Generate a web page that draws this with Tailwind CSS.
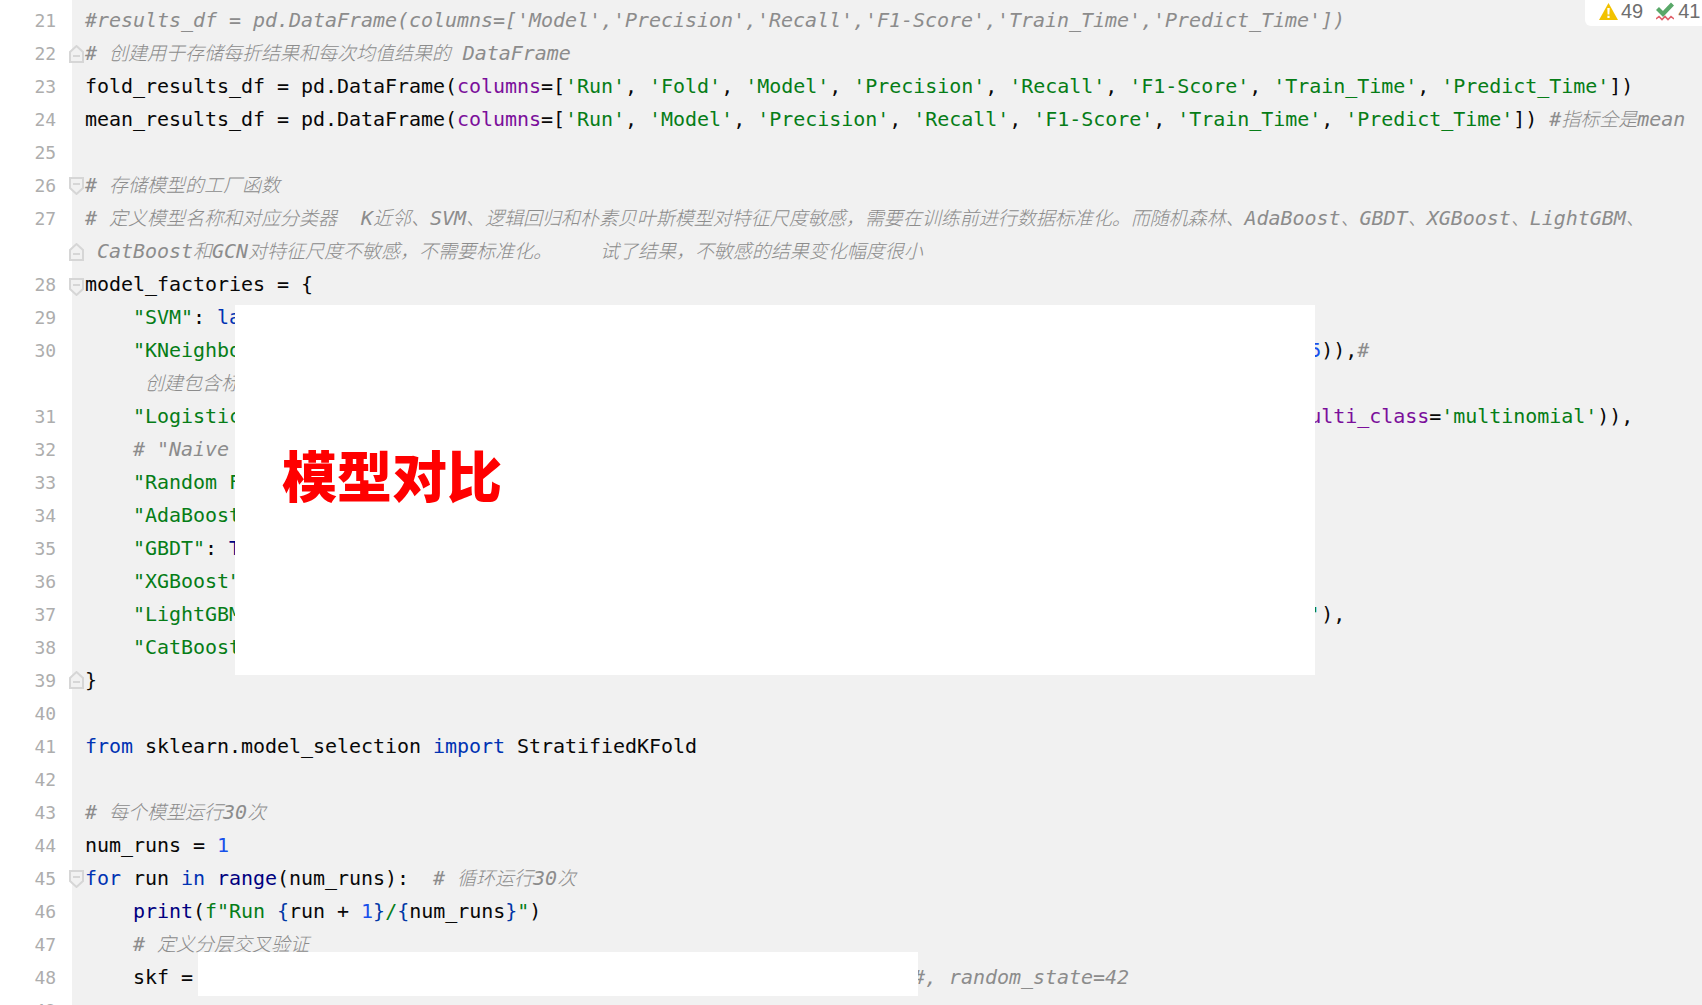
<!DOCTYPE html>
<html lang="zh">
<head>
<meta charset="utf-8">
<script src="https://cdn.jsdelivr.net/npm/@tailwindcss/browser@4"></script>
<title>模型对比</title>
</head>
<body class="bg-white">
<div class="relative w-[1702px] h-[1005px] overflow-hidden bg-white font-['DejaVu_Sans_Mono','Noto_Sans_CJK_SC',monospace]">
  <div class="absolute left-[72px] top-0 bottom-0 right-0 bg-[#f1f1f1]"></div>
  <div class="relative flex flex-col pt-[4px] text-[20px] leading-[33px] tracking-[-0.04px] text-[#080808] whitespace-pre">
    <div class="flex h-[33px] shrink-0"><span class="w-[56px] text-right text-[18px] text-[#adadad]">21</span><span class="pl-[29px] italic text-[#8c8c8c]">#results_df = pd.DataFrame(columns=['Model','Precision','Recall','F1-Score','Train_Time','Predict_Time'])</span></div>
    <div class="flex h-[33px] shrink-0"><span class="w-[56px] text-right text-[18px] text-[#adadad]">22</span><span class="pl-[29px] italic font-light text-[#8c8c8c]"># <span class="text-[19.05px]">创建用于存储每折结果和每次均值结果的</span> DataFrame</span></div>
    <div class="flex h-[33px] shrink-0"><span class="w-[56px] text-right text-[18px] text-[#adadad]">23</span><span class="pl-[29px]">fold_results_df = pd.DataFrame(<span class="text-[#7b0f9b]">columns</span>=[<span class="text-[#067d17]">'Run'</span>, <span class="text-[#067d17]">'Fold'</span>, <span class="text-[#067d17]">'Model'</span>, <span class="text-[#067d17]">'Precision'</span>, <span class="text-[#067d17]">'Recall'</span>, <span class="text-[#067d17]">'F1-Score'</span>, <span class="text-[#067d17]">'Train_Time'</span>, <span class="text-[#067d17]">'Predict_Time'</span>])</span></div>
    <div class="flex h-[33px] shrink-0"><span class="w-[56px] text-right text-[18px] text-[#adadad]">24</span><span class="pl-[29px]">mean_results_df = pd.DataFrame(<span class="text-[#7b0f9b]">columns</span>=[<span class="text-[#067d17]">'Run'</span>, <span class="text-[#067d17]">'Model'</span>, <span class="text-[#067d17]">'Precision'</span>, <span class="text-[#067d17]">'Recall'</span>, <span class="text-[#067d17]">'F1-Score'</span>, <span class="text-[#067d17]">'Train_Time'</span>, <span class="text-[#067d17]">'Predict_Time'</span>]) <span class="italic font-light text-[#8c8c8c]">#<span class="text-[19.05px]">指标全是</span>mean</span></span></div>
    <div class="flex h-[33px] shrink-0"><span class="w-[56px] text-right text-[18px] text-[#adadad]">25</span></div>
    <div class="flex h-[33px] shrink-0"><span class="w-[56px] text-right text-[18px] text-[#adadad]">26</span><span class="pl-[29px] italic font-light text-[#8c8c8c]"># <span class="text-[19.05px]">存储模型的工厂函数</span></span></div>
    <div class="flex h-[33px] shrink-0"><span class="w-[56px] text-right text-[18px] text-[#adadad]">27</span><span class="pl-[29px] italic font-light text-[#8c8c8c]"># <span class="text-[19.05px]">定义模型名称和对应分类器</span>  K<span class="text-[19.05px]">近邻、</span>SVM<span class="text-[19.05px]">、逻辑回归和朴素贝叶斯模型对特征尺度敏感，需要在训练前进行数据标准化。而随机森林、</span>AdaBoost<span class="text-[19.05px]">、</span>GBDT<span class="text-[19.05px]">、</span>XGBoost<span class="text-[19.05px]">、</span>LightGBM<span class="text-[19.05px]">、</span></span></div>
    <div class="flex h-[33px] shrink-0"><span class="w-[56px]"></span><span class="pl-[29px] italic font-light text-[#8c8c8c]"> CatBoost<span class="text-[19.05px]">和</span>GCN<span class="text-[19.05px]">对特征尺度不敏感，不需要标准化。</span>    <span class="text-[19.05px]">试了结果，不敏感的结果变化幅度很小</span></span></div>
    <div class="flex h-[33px] shrink-0"><span class="w-[56px] text-right text-[18px] text-[#adadad]">28</span><span class="pl-[29px]">model_factories = {</span></div>
    <div class="flex h-[33px] shrink-0"><span class="w-[56px] text-right text-[18px] text-[#adadad]">29</span><span class="pl-[29px]">    <span class="text-[#067d17]">"SVM"</span>: <span class="text-[#0033b3]">la</span></span></div>
    <div class="flex h-[33px] shrink-0"><span class="w-[56px] text-right text-[18px] text-[#adadad]">30</span><span class="pl-[29px]">    <span class="text-[#067d17]">"KNeighbo</span>                                                                                         <span class="text-[#1750eb]">5</span>)),<span class="italic font-light text-[#8c8c8c]">#</span></span></div>
    <div class="flex h-[33px] shrink-0"><span class="w-[56px]"></span><span class="pl-[29px] italic font-light text-[#8c8c8c]">     <span class="text-[19.05px]">创建包含标</span></span></div>
    <div class="flex h-[33px] shrink-0"><span class="w-[56px] text-right text-[18px] text-[#adadad]">31</span><span class="pl-[29px]">    <span class="text-[#067d17]">"Logistic</span>                                                                                         <span class="text-[#7b0f9b]">ulti_class</span>=<span class="text-[#067d17]">'multinomial'</span>)),</span></div>
    <div class="flex h-[33px] shrink-0"><span class="w-[56px] text-right text-[18px] text-[#adadad]">32</span><span class="pl-[29px] italic font-light text-[#8c8c8c]">    # "Naive </span></div>
    <div class="flex h-[33px] shrink-0"><span class="w-[56px] text-right text-[18px] text-[#adadad]">33</span><span class="pl-[29px]">    <span class="text-[#067d17]">"Random F</span></span></div>
    <div class="flex h-[33px] shrink-0"><span class="w-[56px] text-right text-[18px] text-[#adadad]">34</span><span class="pl-[29px]">    <span class="text-[#067d17]">"AdaBoost</span></span></div>
    <div class="flex h-[33px] shrink-0"><span class="w-[56px] text-right text-[18px] text-[#adadad]">35</span><span class="pl-[29px]">    <span class="text-[#067d17]">"GBDT"</span>: <span class="text-[#000080]">T</span></span></div>
    <div class="flex h-[33px] shrink-0"><span class="w-[56px] text-right text-[18px] text-[#adadad]">36</span><span class="pl-[29px]">    <span class="text-[#067d17]">"XGBoost"</span></span></div>
    <div class="flex h-[33px] shrink-0"><span class="w-[56px] text-right text-[18px] text-[#adadad]">37</span><span class="pl-[29px]">    <span class="text-[#067d17]">"LightGBM</span>                                                                                         <span class="text-[#067d17]">'</span>),</span></div>
    <div class="flex h-[33px] shrink-0"><span class="w-[56px] text-right text-[18px] text-[#adadad]">38</span><span class="pl-[29px]">    <span class="text-[#067d17]">"CatBoost</span></span></div>
    <div class="flex h-[33px] shrink-0"><span class="w-[56px] text-right text-[18px] text-[#adadad]">39</span><span class="pl-[29px]">}</span></div>
    <div class="flex h-[33px] shrink-0"><span class="w-[56px] text-right text-[18px] text-[#adadad]">40</span></div>
    <div class="flex h-[33px] shrink-0"><span class="w-[56px] text-right text-[18px] text-[#adadad]">41</span><span class="pl-[29px]"><span class="text-[#0033b3]">from</span> sklearn.model_selection <span class="text-[#0033b3]">import</span> StratifiedKFold</span></div>
    <div class="flex h-[33px] shrink-0"><span class="w-[56px] text-right text-[18px] text-[#adadad]">42</span></div>
    <div class="flex h-[33px] shrink-0"><span class="w-[56px] text-right text-[18px] text-[#adadad]">43</span><span class="pl-[29px] italic font-light text-[#8c8c8c]"># <span class="text-[19.05px]">每个模型运行</span>30<span class="text-[19.05px]">次</span></span></div>
    <div class="flex h-[33px] shrink-0"><span class="w-[56px] text-right text-[18px] text-[#adadad]">44</span><span class="pl-[29px]">num_runs = <span class="text-[#1750eb]">1</span></span></div>
    <div class="flex h-[33px] shrink-0"><span class="w-[56px] text-right text-[18px] text-[#adadad]">45</span><span class="pl-[29px]"><span class="text-[#0033b3]">for</span> run <span class="text-[#0033b3]">in</span> <span class="text-[#000080]">range</span>(num_runs):  <span class="italic font-light text-[#8c8c8c]"># <span class="text-[19.05px]">循环运行</span>30<span class="text-[19.05px]">次</span></span></span></div>
    <div class="flex h-[33px] shrink-0"><span class="w-[56px] text-right text-[18px] text-[#adadad]">46</span><span class="pl-[29px]">    <span class="text-[#000080]">print</span>(<span class="text-[#067d17]">f"Run </span><span class="text-[#0037a6]">{</span>run + <span class="text-[#1750eb]">1</span><span class="text-[#0037a6]">}</span><span class="text-[#067d17]">/</span><span class="text-[#0037a6]">{</span>num_runs<span class="text-[#0037a6]">}</span><span class="text-[#067d17]">"</span>)</span></div>
    <div class="flex h-[33px] shrink-0"><span class="w-[56px] text-right text-[18px] text-[#adadad]">47</span><span class="pl-[29px] italic font-light text-[#8c8c8c]">    # <span class="text-[19.05px]">定义分层交叉验证</span></span></div>
    <div class="flex h-[33px] shrink-0"><span class="w-[56px] text-right text-[18px] text-[#adadad]">48</span><span class="pl-[29px]">    skf =                                                            <span class="italic font-light text-[#8c8c8c]">#, random_state=42</span></span></div>
    <div class="flex h-[33px] shrink-0"><span class="w-[56px] text-right text-[18px] text-[#adadad]">49</span></div>
  </div>

  <!-- fold markers -->
  <svg class="absolute left-[69px] top-[45px]" width="15" height="18" viewBox="0 0 15 18" fill="#f1f1f1" stroke="#d6d6d6" stroke-width="2"><path d="M1 17V7l6.5-6L14 7v10z"/><path d="M4 11h7"/></svg>
  <svg class="absolute left-[69px] top-[177px]" width="15" height="18" viewBox="0 0 15 18" fill="#f1f1f1" stroke="#d6d6d6" stroke-width="2"><path d="M1 1v10l6.5 6L14 11V1z"/><path d="M4 7h7"/></svg>
  <svg class="absolute left-[69px] top-[243px]" width="15" height="18" viewBox="0 0 15 18" fill="#f1f1f1" stroke="#d6d6d6" stroke-width="2"><path d="M1 17V7l6.5-6L14 7v10z"/><path d="M4 11h7"/></svg>
  <svg class="absolute left-[69px] top-[278px]" width="15" height="18" viewBox="0 0 15 18" fill="#f1f1f1" stroke="#d6d6d6" stroke-width="2"><path d="M1 1v10l6.5 6L14 11V1z"/><path d="M4 7h7"/></svg>
  <svg class="absolute left-[69px] top-[671px]" width="15" height="18" viewBox="0 0 15 18" fill="#f1f1f1" stroke="#d6d6d6" stroke-width="2"><path d="M1 17V7l6.5-6L14 7v10z"/><path d="M4 11h7"/></svg>
  <svg class="absolute left-[69px] top-[870px]" width="15" height="18" viewBox="0 0 15 18" fill="#f1f1f1" stroke="#d6d6d6" stroke-width="2"><path d="M1 1v10l6.5 6L14 11V1z"/><path d="M4 7h7"/></svg>

  <!-- redaction panels -->
  <div class="absolute left-[235px] top-[305px] w-[1080px] h-[370px] bg-white pl-[47px] pt-[141px]">
    <div class="text-[55px] leading-[55px] font-black text-[#ff0000] font-['Noto_Sans_CJK_SC',sans-serif]">模型对比</div>
  </div>
  <div class="absolute left-[198px] top-[952px] w-[720px] h-[44px] bg-white"></div>

  <!-- inspection widget -->
  <div class="absolute top-0 right-0 w-[117px] h-[26px] bg-white rounded-bl-[6px] flex items-center pl-[14px] pb-[4px] text-[20px] leading-[22px] text-[#6e6e6e] font-['Liberation_Sans',sans-serif]">
    <svg width="19" height="17" viewBox="0 0 19 17" class="mr-[3px]"><path d="M9.5 0L19 17H0z" fill="#f2c200"/><path d="M8.3 5h2.4l-.3 6.5H8.6zM8.4 12.7h2.2v2.2H8.4z" fill="#fff"/></svg>
    <span>49</span>
    <svg width="18" height="20" viewBox="0 0 18 20" class="ml-[13px] mr-[4px] mt-[2px]"><path d="M1.5 6.5l5.5 5.5 9.5-10" fill="none" stroke="#59a869" stroke-width="4.2"/><path d="M0 17l3-2.5 3 3 3-3 3 3 3-3 3 2.5" fill="none" stroke="#e0606a" stroke-width="1.6"/></svg>
    <span>41</span>
  </div>
</div>
</body>
</html>
